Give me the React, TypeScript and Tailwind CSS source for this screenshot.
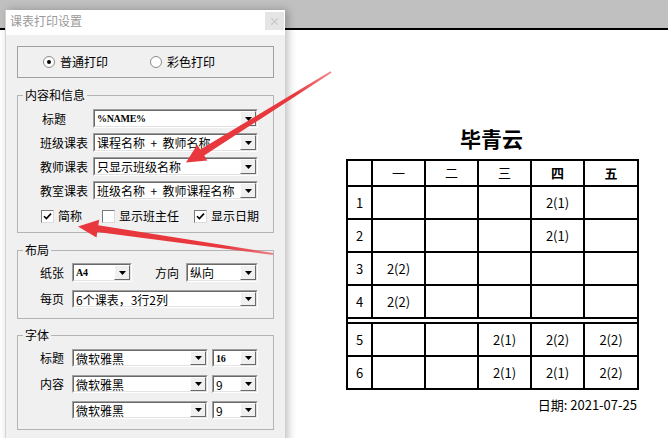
import type { ReactNode } from 'react';

const CJK = "font-['Noto_Sans_CJK_SC','Liberation_Sans',sans-serif]";

const DropArrow = () => (
  <svg width="7" height="4" viewBox="0 0 7 4">
    <path d="M0 0 H7 L3.5 4 Z" fill="#000" />
  </svg>
);

// Win32-style combo box: sunken white field plus a raised drop button
const Combo = ({ className, children }: { className: string; children?: ReactNode }) => (
  <div
    className={`flex border border-t-[#a0a0a0] border-l-[#a0a0a0] border-b-white border-r-white ${className}`}
  >
    <div className="flex flex-1 min-w-0 border border-t-[#696969] border-l-[#696969] border-b-[#e3e3e3] border-r-[#e3e3e3] bg-white">
      <div className="flex flex-1 min-w-0 items-center whitespace-pre pl-[2px] text-[12px] leading-[15px] text-black">
        {children}
      </div>
      <div className="flex w-[16px] shrink-0 items-center justify-center border border-t-white border-l-white border-b-[#696969] border-r-[#696969] bg-[#f0f0f0]">
        <DropArrow />
      </div>
    </div>
  </div>
);

const SmallBold = ({ children }: { children: ReactNode }) => (
  <span className="font-['Liberation_Serif',serif] text-[10px] font-bold tracking-[-0.3px]">{children}</span>
);

const Radio = ({ checked }: { checked?: boolean }) => (
  <span className="flex h-[12px] w-[12px] items-center justify-center rounded-full border border-[#8a8a8a] bg-white">
    {checked && <span className="h-[4px] w-[4px] rounded-full bg-black" />}
  </span>
);

const Checkbox = ({ checked }: { checked?: boolean }) => (
  <span className="flex h-[13px] w-[13px] items-center justify-center border border-t-[#7a7a7a] border-l-[#7a7a7a] border-b-[#dcdcdc] border-r-[#dcdcdc] bg-white">
    {checked && (
      <svg width="9" height="9" viewBox="0 0 9 9">
        <path d="M1 4.2 L3.4 6.6 L8 1.6" fill="none" stroke="#000" strokeWidth="1.6" />
      </svg>
    )}
  </span>
);

const Group = ({ title, className, children }: { title: string; className: string; children: ReactNode }) => (
  <div className={`relative border border-[#b4b4b4] ${className}`}>
    <span className="absolute -top-[9px] left-[5px] bg-[#f0f0f0] px-[2px] text-[12px] leading-[16px]">{title}</span>
    {children}
  </div>
);

const header = ['', '一', '二', '三', '四', '五'];
const timetable = [
  ['1', '', '', '', '2(1)', ''],
  ['2', '', '', '', '2(1)', ''],
  ['3', '2(2)', '', '', '', ''],
  ['4', '2(2)', '', '', '', ''],
  null,
  ['5', '', '', '2(1)', '2(2)', '2(2)'],
  ['6', '', '', '2(1)', '2(1)', '2(2)'],
];

const Arrows = () => (
  <svg className="pointer-events-none absolute left-0 top-0" width="668" height="438" viewBox="0 0 668 438">
    <defs>
      <linearGradient id="tail1" x1="331" y1="72" x2="187" y2="162" gradientUnits="userSpaceOnUse">
        <stop offset="0" stopColor="#e8383d" stopOpacity="0.6" />
        <stop offset="0.25" stopColor="#e8383d" stopOpacity="1" />
        <stop offset="1" stopColor="#e8383d" />
      </linearGradient>
      <linearGradient id="tail2" x1="273" y1="254" x2="80" y2="226" gradientUnits="userSpaceOnUse">
        <stop offset="0" stopColor="#e8383d" stopOpacity="0.6" />
        <stop offset="0.25" stopColor="#e8383d" stopOpacity="1" />
        <stop offset="1" stopColor="#e8383d" />
      </linearGradient>
    </defs>
    <polygon
      points="331.5,72.8 204.2,155.5 207.3,160.4 186,162.5 197.2,144.8 200.3,149.4 330.5,71.2"
      fill="url(#tail1)"
    />
    <polygon
      points="272.8,255 97.3,232 96.5,237.5 78,226.5 99.2,219.8 98.3,225.2 273.2,253"
      fill="url(#tail2)"
    />
  </svg>
);

const PrintDialog = () => (
  <div className={`absolute left-[5px] top-[10px] w-[280px] h-[440px] border-l border-[#d4d4d4] bg-[#f0f0f0] shadow-[3px_0_8px_rgba(0,0,0,0.25)] ${CJK}`}>
    <div className="flex h-[25px] items-start justify-between bg-white">
      <span className="pl-[4px] pt-[3px] text-[12px] leading-[16px] text-[#9a9a9a]">课表打印设置</span>
      <span className="mr-[1px] mt-[2px] flex h-[18px] w-[19px] items-center justify-center bg-[#e5e5e5] text-[11px] leading-none text-[#bdbdbd]">
        ×
      </span>
    </div>

    <div className="px-[11px] pt-[11px] text-[12px] text-black">
      <div className="flex h-[32px] items-center border border-[#a0a0a0] pl-[25px]">
        <Radio checked />
        <span className="ml-[5px] leading-none">普通打印</span>
        <span className="ml-[42px]">
          <Radio />
        </span>
        <span className="ml-[5px] leading-none">彩色打印</span>
      </div>

      <Group title="内容和信息" className="mt-[17px] pl-[22px] pt-[13px] pb-[9px]">
        <div className="flex flex-col gap-[5px]">
          <div className="flex items-center">
            <span className="ml-[2px] w-[51px]">标题</span>
            <Combo className="h-[19px] w-[165px]">
              <SmallBold>%NAME%</SmallBold>
            </Combo>
          </div>
          <div className="flex items-center">
            <span className="w-[53px]">班级课表</span>
            <Combo className="h-[19px] w-[165px]">课程名称  +  教师名称</Combo>
          </div>
          <div className="flex items-center">
            <span className="w-[53px]">教师课表</span>
            <Combo className="h-[19px] w-[165px]">只显示班级名称</Combo>
          </div>
          <div className="flex items-center">
            <span className="w-[53px]">教室课表</span>
            <Combo className="h-[19px] w-[165px]">班级名称  +  教师课程名称</Combo>
          </div>
        </div>
        <div className="mt-[9px] flex h-[14px] items-center pl-[1px]">
          <Checkbox checked />
          <span className="ml-[4px] leading-none">简称</span>
          <span className="ml-[20px]">
            <Checkbox />
          </span>
          <span className="ml-[4px] leading-none">显示班主任</span>
          <span className="ml-[15px]">
            <Checkbox checked />
          </span>
          <span className="ml-[4px] leading-none">显示日期</span>
        </div>
      </Group>

      <Group title="布局" className="mt-[17px] pl-[22px] pt-[12px] pb-[10px]">
        <div className="flex items-center">
          <span className="w-[32px]">纸张</span>
          <Combo className="h-[19px] w-[60px]">
            <SmallBold>A4</SmallBold>
          </Combo>
          <span className="ml-[23px] w-[31px]">方向</span>
          <Combo className="h-[19px] w-[72px]">纵向</Combo>
        </div>
        <div className="mt-[8px] flex items-center">
          <span className="w-[32px]">每页</span>
          <Combo className="h-[18px] w-[186px]">6个课表，3行2列</Combo>
        </div>
      </Group>

      <Group title="字体" className="mt-[16px] pl-[22px] pt-[13px] pb-[10px]">
        <div className="flex flex-col gap-[8px]">
          <div className="flex items-center">
            <span className="w-[32px]">标题</span>
            <Combo className="h-[18px] w-[136px]">微软雅黑</Combo>
            <Combo className="ml-[4px] h-[18px] w-[46px]">
              <SmallBold>16</SmallBold>
            </Combo>
          </div>
          <div className="flex items-center">
            <span className="w-[32px]">内容</span>
            <Combo className="h-[18px] w-[136px]">微软雅黑</Combo>
            <Combo className="ml-[4px] h-[18px] w-[46px]">9</Combo>
          </div>
          <div className="flex items-center pl-[32px]">
            <Combo className="h-[18px] w-[136px]">微软雅黑</Combo>
            <Combo className="ml-[4px] h-[18px] w-[46px]">9</Combo>
          </div>
        </div>
      </Group>
    </div>
  </div>
);

const PrintPreview = () => (
  <div className={`mt-[28px] flex h-[410px] justify-end border-t-2 border-black bg-white pr-[31px] ${CJK}`}>
    <div className="flex w-[291px] flex-col pt-[96px] text-black">
      <div className="text-center text-[21px] font-bold leading-[24px]">毕青云</div>
      <table className="mt-[9px] w-[291px] table-fixed border-collapse text-[13px]">
        <colgroup>
          <col className="w-[25px]" />
          <col className="w-[53px]" />
          <col className="w-[53px]" />
          <col className="w-[53px]" />
          <col className="w-[53px]" />
          <col className="w-[54px]" />
        </colgroup>
        <tbody>
          <tr className="h-[26px]">
            {header.map((day, i) => (
              <td key={i} className={`border-2 border-black p-0 text-center ${i >= 4 ? 'font-bold' : ''}`}>
                {day}
              </td>
            ))}
          </tr>
          {timetable.map((row, r) =>
            row ? (
              <tr key={r} className="h-[33px]">
                {row.map((cell, c) => (
                  <td key={c} className="border-2 border-black p-0 text-center">
                    {cell}
                  </td>
                ))}
              </tr>
            ) : (
              <tr key={r}>
                <td colSpan={6} className="h-[5px] border-2 border-black p-0 text-[0px] leading-none" />
              </tr>
            )
          )}
        </tbody>
      </table>
      <div className="mt-[7px] text-right text-[13px] leading-[16px]">日期: 2021-07-25</div>
    </div>
  </div>
);

export default function App() {
  return (
    <div className="relative h-[438px] w-[668px] overflow-hidden bg-[#c0c0c0]">
      <PrintPreview />
      <PrintDialog />
      <Arrows />
    </div>
  );
}
